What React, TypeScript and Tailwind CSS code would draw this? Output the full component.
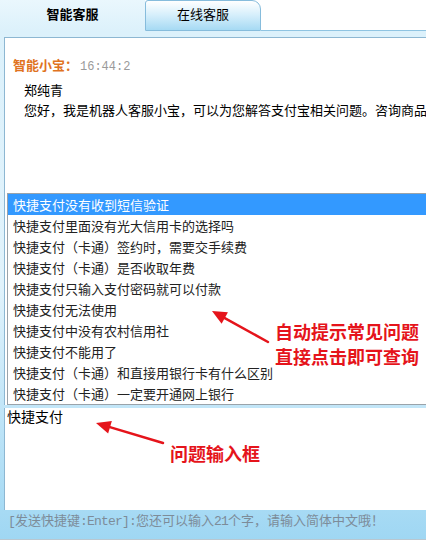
const suggestions = [
  "快捷支付没有收到短信验证",
  "快捷支付里面没有光大信用卡的选择吗",
  "快捷支付（卡通）签约时，需要交手续费",
  "快捷支付（卡通）是否收取年费",
  "快捷支付只输入支付密码就可以付款",
  "快捷支付无法使用",
  "快捷支付中没有农村信用社",
  "快捷支付不能用了",
  "快捷支付（卡通）和直接用银行卡有什么区别",
  "快捷支付（卡通）一定要开通网上银行",
];

const cjk = { fontFamily: '"Noto Sans CJK SC", "Noto Sans", sans-serif' };
const mono = { fontFamily: '"Liberation Mono", "Noto Sans CJK SC", monospace' };

function Arrow({ x1, y1, x2, y2 }: { x1: number; y1: number; x2: number; y2: number }) {
  // arrow drawn from tail (x1,y1) to tip (x2,y2)
  const ang = Math.atan2(y2 - y1, x2 - x1);
  const len = 16;
  const w = 0.42;
  const a = { x: x2 - len * Math.cos(ang - w), y: y2 - len * Math.sin(ang - w) };
  const b = { x: x2 - len * Math.cos(ang + w), y: y2 - len * Math.sin(ang + w) };
  const bx = x2 - 11 * Math.cos(ang);
  const by = y2 - 11 * Math.sin(ang);
  return (
    <g>
      <line x1={x1} y1={y1} x2={bx} y2={by} stroke="#e5141b" strokeWidth={2.5} strokeLinecap="round" />
      <polygon points={`${x2},${y2} ${a.x},${a.y} ${b.x},${b.y}`} fill="#e5141b" />
    </g>
  );
}

export default function App() {
  return (
    <div className="relative w-[426px] h-[542px] overflow-hidden bg-white text-[13px] text-black" style={cjk}>
      {/* tabs */}
      <div className="flex h-[31px]">
        <div className="w-[145px] flex items-center justify-center bg-gradient-to-b from-[#eaf7fd] to-[#dcf1fb] font-bold text-[13px] pb-[4px]">
          智能客服
        </div>
        <div className="w-[116px] flex items-center justify-center border border-[#86bcdc] rounded-tl-[3px] rounded-tr-[9px] bg-gradient-to-b from-[#ffffff] via-[#d4eefb] to-[#a6daf4] text-[13px] pb-[4px]">
          在线客服
        </div>
        <div className="flex-1 border-b border-[#8fc4e2]" />
      </div>

      {/* panel */}
      <div className="h-[509px] bg-gradient-to-b from-[#dcf1fb] via-[#e1f3fc] to-[#9fd7f3] pl-[4px] pt-[6px] flex flex-col">
        <div className="h-[368px] bg-white border-l border-t border-[#8db7d2] pl-[8px] pt-[17px]">
          <div className="flex items-baseline gap-[2px] leading-[20px]">
            <span className="font-bold text-[#e0731f]">智能小宝：</span>
            <span className="text-[#9a9a9a] text-[12px]" style={mono}>16:44:2</span>
          </div>
          <div className="pl-[11px] leading-[20px] pt-[3px] whitespace-nowrap">
            <div>郑纯青</div>
            <div>您好，我是机器人客服小宝，可以为您解答支付宝相关问题。咨询商品</div>
          </div>
        </div>
        <div className="h-[102px] mt-[3px] bg-white border-l border-[#8db7d2] pl-[2px] pt-0 text-[14px] leading-[17px]">
          快捷支付
        </div>
        <div className="pl-[4px] pt-[2px] text-[13px] text-[#7d8c99] whitespace-nowrap" style={mono}>
          <span className="tracking-[-0.8px]">[</span>发送快捷键
          <span className="tracking-[-0.8px]">:Enter]:</span>您还可以输入
          <span className="tracking-[-0.8px]">21</span>个字，请输入简体中文哦！
        </div>
      </div>
      <div className="absolute left-0 right-0 bottom-[2px] h-px bg-[#b9c7d0]" />

      {/* autocomplete dropdown */}
      <div className="absolute left-[7px] top-[193px] w-[440px] bg-white border-l border-t border-b border-[#9aa3aa]">
        {suggestions.map((s, i) => (
          <div
            key={s}
            className={
              i === 0
                ? "h-[21px] leading-[21px] pl-[5px] bg-[#3399ff] text-white whitespace-nowrap"
                : "h-[21px] leading-[21px] pl-[5px] text-[#222] whitespace-nowrap"
            }
          >
            {s}
          </div>
        ))}
      </div>

      {/* annotations */}
      <svg className="absolute left-0 top-0 pointer-events-none" width={426} height={542}>
        <Arrow x1={268} y1={342} x2={212} y2={311} />
        <Arrow x1={163} y1={443} x2={96} y2={423} />
      </svg>
      <div className="absolute left-[275px] top-[319px] text-[18px] leading-[25px] font-bold text-[#e5141b]">
        <div>自动提示常见问题</div>
        <div>直接点击即可查询</div>
      </div>
      <div className="absolute left-[170px] top-[441px] text-[18px] leading-[25px] font-bold text-[#e5141b]">
        问题输入框
      </div>
    </div>
  );
}
